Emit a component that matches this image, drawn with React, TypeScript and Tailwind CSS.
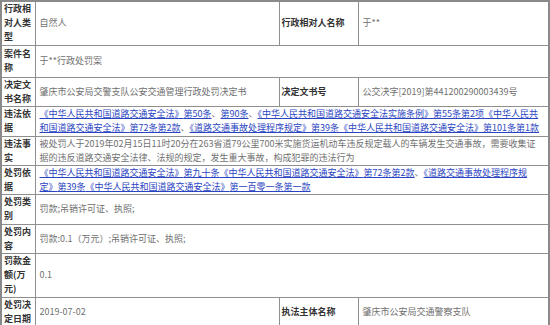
import React from "react";

const font = { fontFamily: '"Noto Sans CJK SC", "Noto Sans", sans-serif' };

function Label({ children, className = "" }: { children: React.ReactNode; className?: string }) {
  return (
    <td className={`border border-[#8f8f8f] px-[2px] py-0 align-middle font-bold text-[#333] ${className}`}>
      {children}
    </td>
  );
}

function Value({ children, colSpan, className = "" }: { children?: React.ReactNode; colSpan?: number; className?: string }) {
  return (
    <td colSpan={colSpan} className={`border border-[#8f8f8f] px-[4px] py-0 align-middle text-[#707070] ${className}`}>
      {children}
    </td>
  );
}

function L({ children }: { children: React.ReactNode }) {
  return <span className="text-[#2b45c2] underline decoration-[#2b45c2]">{children}</span>;
}

export default function App() {
  return (
    <div className="bg-white w-[550px] h-[325px] overflow-hidden" style={font}>
      <table className="table-fixed border-collapse border-2 border-[#8a8a8a] w-[548px] text-[9px] leading-[14px]">
        <colgroup>
          <col className="w-[34px]" />
          <col className="w-[244px]" />
          <col className="w-[79px]" />
          <col className="w-[191px]" />
        </colgroup>
        <tbody>
          <tr className="h-[44px]">
            <Label>行政相对人类型</Label>
            <Value>自然人</Value>
            <Label>行政相对人名称</Label>
            <Value>于**</Value>
          </tr>
          <tr className="h-[32px]">
            <Label>案件名称</Label>
            <Value colSpan={3}>于**行政处罚案</Value>
          </tr>
          <tr className="h-[28px]">
            <Label>决定文书名称</Label>
            <Value>肇庆市公安局交警支队公安交通管理行政处罚决定书</Value>
            <Label>决定文书号</Label>
            <Value>公交决字[2019]第441200290003439号</Value>
          </tr>
          <tr className="h-[30px]">
            <Label>违法依据</Label>
            <Value colSpan={3} className="whitespace-nowrap">
              <L>《中华人民共和国道路交通安全法》</L>
              <L>第50条</L>、<L>第90条</L>、<L>《中华人民共和国道路交通安全法实施条例》</L>
              <L>第55条第2项</L>
              <L>《中华人民共</L>
              <br />
              <L>和国道路交通安全法》</L>
              <L>第72条第2款</L>、<L>《道路交通事故处理程序规定》</L>
              <L>第39条</L>
              <L>《中华人民共和国道路交通安全法》</L>
              <L>第101条第1款</L>
            </Value>
          </tr>
          <tr className="h-[28px]">
            <Label>违法事实</Label>
            <Value colSpan={3} className="whitespace-nowrap">
              被处罚人于2019年02月15日11时20分在263省道79公里700米实施货运机动车违反规定载人的车辆发生交通事故，需要收集证
              <br />
              据的违反道路交通安全法律、法规的规定，发生重大事故，构成犯罪的违法行为
            </Value>
          </tr>
          <tr className="h-[29px]">
            <Label>处罚依据</Label>
            <Value colSpan={3} className="whitespace-nowrap">
              <L>《中华人民共和国道路交通安全法》</L>
              <L>第九十条</L>
              <L>《中华人民共和国道路交通安全法》</L>
              <L>第72条第2款</L>、<L>《道路交通事故处理程序规</L>
              <br />
              <L>定》</L>
              <L>第39条</L>
              <L>《中华人民共和国道路交通安全法》</L>
              <L>第一百零一条第一款</L>
            </Value>
          </tr>
          <tr className="h-[30px]">
            <Label>处罚类别</Label>
            <Value colSpan={3}>罚款;吊销许可证、执照;</Value>
          </tr>
          <tr className="h-[29px]">
            <Label>处罚内容</Label>
            <Value colSpan={3}>罚款:0.1（万元）;吊销许可证、执照;</Value>
          </tr>
          <tr className="h-[44px]">
            <Label>罚款金额(万元)</Label>
            <Value colSpan={3}>0.1</Value>
          </tr>
          <tr className="h-[29px]">
            <Label>处罚决定日期</Label>
            <Value>2019-07-02</Value>
            <Label>执法主体名称</Label>
            <Value>肇庆市公安局交通警察支队</Value>
          </tr>
        </tbody>
      </table>
    </div>
  );
}
